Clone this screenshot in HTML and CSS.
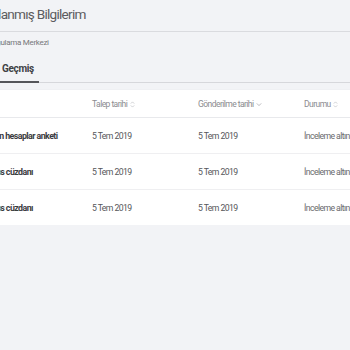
FILE: index.html
```html
<!DOCTYPE html>
<html lang="tr">
<head>
<meta charset="utf-8">
<link rel="stylesheet" href="styles.css">
</head>
<body>
<div class="page">
  <header class="head">
    <h1 class="title">Saklanmış Bilgilerim</h1>
  </header>
  <div class="crumb">Uygulama Merkezi</div>
  <nav class="tabs">
    <span class="tab active">Geçmiş</span>
  </nav>
  <div class="card">
    <div class="row hrow">
      <div class="cell"></div>
      <div class="cell">Talep tarihi <span class="sort">
        <svg width="5" height="7" viewBox="0 0 5 7"><path d="M0.8 2.6 2.5 0.9 4.2 2.6M0.8 4.4 2.5 6.1 4.2 4.4" fill="none" stroke="#c4c5c9" stroke-width="0.8"/></svg></span></div>
      <div class="cell">Gönderilme tarihi <span class="sort">
        <svg width="6" height="5" viewBox="0 0 6 5"><path d="M0.8 1.4 3 3.6 5.2 1.4" fill="none" stroke="#a9aaae" stroke-width="0.8"/></svg></span></div>
      <div class="cell">Durumu <span class="sort">
        <svg width="5" height="7" viewBox="0 0 5 7"><path d="M0.8 2.6 2.5 0.9 4.2 2.6M0.8 4.4 2.5 6.1 4.2 4.4" fill="none" stroke="#c4c5c9" stroke-width="0.8"/></svg></span></div>
    </div>
    <div class="row">
      <div class="cell name">Açılan hesaplar anketi</div>
      <div class="cell">5 Tem 2019</div>
      <div class="cell">5 Tem 2019</div>
      <div class="cell status">İnceleme altında</div>
    </div>
    <div class="row">
      <div class="cell name">Bonus cüzdanı</div>
      <div class="cell">5 Tem 2019</div>
      <div class="cell">5 Tem 2019</div>
      <div class="cell status">İnceleme altında</div>
    </div>
    <div class="row last">
      <div class="cell name">Bonus cüzdanı</div>
      <div class="cell">5 Tem 2019</div>
      <div class="cell">5 Tem 2019</div>
      <div class="cell status">İnceleme altında</div>
    </div>
  </div>
</div>
</body>
</html>
```
FILE: styles.css
```css
html, body {
  margin: 0;
  padding: 0;
  background: #f2f3f6;
  overflow: hidden;
}
body {
  font-family: Roboto, "Noto Sans", sans-serif;
  color: #555;
}
.page {
  margin-left: -22px;
  width: 460px;
}
.head {
  height: 31px;
  border-bottom: 1px solid #dadbdf;
  display: flex;
  align-items: center;
}
.title {
  margin: 0;
  font-size: 13.6px;
  font-weight: 400;
  letter-spacing: -0.75px;
  color: #5c5c5f;
  line-height: 28px;
  padding-bottom: 3px;
  margin-left: 0;
}
.crumb {
  font-size: 8px;
  letter-spacing: -0.3px;
  color: #77787b;
  line-height: 12px;
  margin-top: 5px;
  margin-left: 10px;
}
.tabs {
  display: flex;
  margin-top: 13px;
  border-bottom: 1px solid #d6d7db;
}
.tab {
  font-size: 10px;
  font-weight: 700;
  letter-spacing: -0.35px;
  color: #404144;
  line-height: 14px;
  padding: 0 5px 5px 24px;
  border-bottom: 2px solid #55565a;
  margin-bottom: -1px;
}
.card {
  margin-top: 7px;
  background: #fff;
  box-shadow: 0 1px 3px rgba(0,0,0,0.07);
}
.row {
  display: grid;
  grid-template-columns: 114px 106px 106px 1fr;
  height: 35px;
  align-items: center;
  border-bottom: 1px solid #efeff1;
  font-size: 8.7px;
  letter-spacing: -0.6px;
  color: #56575a;
}
.row.last { border-bottom: none; height: 35px; }
.hrow {
  height: 27px;
  color: #8b8c90;
  font-size: 8.5px;
  letter-spacing: -0.55px;
  border-bottom: 1px solid #e8e9ec;
}
.cell { white-space: nowrap; }
.name {
  font-weight: 700;
  color: #3b3c3f;
  font-size: 8.8px;
  letter-spacing: -0.55px;
  padding-left: 4px;
}
.status { color: #6a6b6e; }
.sort { display: inline-block; margin-left: 1px; vertical-align: middle; line-height: 0; }
.sort svg { display: block; }
```
